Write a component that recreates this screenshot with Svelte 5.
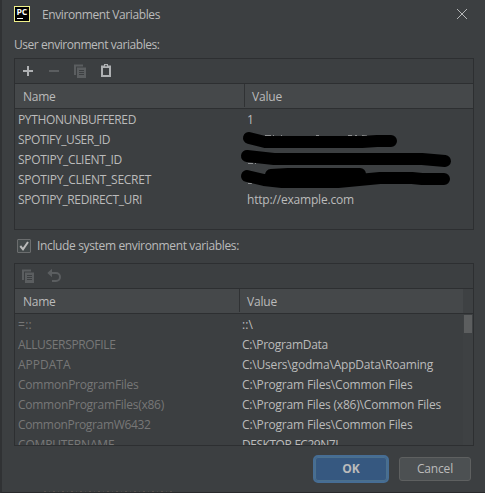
<script>
  const userVars = [
    { name: 'PYTHONUNBUFFERED', w: 118, value: '1', vw: 6 },
    { name: 'SPOTIFY_USER_ID', w: 92 },
    { name: 'SPOTIPY_CLIENT_ID', w: 104 },
    { name: 'SPOTIPY_CLIENT_SECRET', w: 133 },
    { name: 'SPOTIPY_REDIRECT_URI', w: 124, value: 'http://example.com', vw: 107 },
  ];
  const systemVars = [
    { name: '=::', w: 14, value: '::\\', vw: 11 },
    { name: 'ALLUSERSPROFILE', w: 97.5, value: 'C:\\ProgramData', vw: 86 },
    { name: 'APPDATA', w: 52.5, value: 'C:\\Users\\godma\\AppData\\Roaming', vw: 191 },
    { name: 'CommonProgramFiles', w: 120.5, value: 'C:\\Program Files\\Common Files', vw: 170.5 },
    { name: 'CommonProgramFiles(x86)', w: 146, value: 'C:\\Program Files (x86)\\Common Files', vw: 199 },
    { name: 'CommonProgramW6432', w: 132.5, value: 'C:\\Program Files\\Common Files', vw: 170.5 },
    { name: 'COMPUTERNAME', w: 96.5, value: 'DESKTOP-FC29N7L', vw: 99 },
  ];

  // Tracks a label so that it takes up the given width.
  function fit(node, width) {
    const natural = node.getBoundingClientRect().width;
    node.style.letterSpacing = (width - natural) / node.textContent.length + 'px';
  }
</script>

{#snippet label(text, width)}<span class="label" use:fit={width}>{text}</span>{/snippet}

{#snippet copyIcon()}
  <svg class="icon off" width="16" height="16" viewBox="0 0 16 16">
    <path d="M2 1.5h9v2H4v8.5H2z" fill="currentColor" />
    <path fill-rule="evenodd" d="M5 4.5h9v10.5H5zM7 7v1h5V7zM7 9v1h5V9zM7 11v1h5v-1z" fill="currentColor" />
  </svg>
{/snippet}

<div class="dialog">
  <header>
    <svg width="16" height="16" viewBox="0 0 16 16">
      <rect x=".5" y=".5" width="15" height="15" fill="#000" stroke="#eff08a" />
      <text x="2.4" y="9" font-size="8.5" font-weight="700" fill="#fff" textLength="11" lengthAdjust="spacingAndGlyphs">PC</text>
      <path d="M3 12.5h6" stroke="#fff" />
    </svg>
    <h1>{@render label('Environment Variables', 118)}</h1>
    <svg class="close" width="12" height="12" viewBox="0 0 12 12"><path d="M1 1l10 10M11 1L1 11" stroke="#b4b6b7" stroke-width="1" /></svg>
  </header>

  <div class="caption">{@render label('User environment variables:', 145.5)}</div>

  <section class="panel user">
    <div class="toolbar">
      <svg class="icon" width="16" height="16" viewBox="0 0 16 16"><path d="M3 8h10M8 3v10" stroke="currentColor" stroke-width="2" /></svg>
      <svg class="icon off" width="16" height="16" viewBox="0 0 16 16"><path d="M3 8h10" stroke="currentColor" stroke-width="2" /></svg>
      {@render copyIcon()}
      <svg class="icon" width="16" height="16" viewBox="0 0 16 16">
        <path fill-rule="evenodd" d="M3 2.5h3V1h4v1.5h3V14H3zM5 5v7h6V5z" fill="currentColor" /><path d="M7 2.2h2v1H7z" fill="#3c3f41" />
      </svg>
    </div>
    <div class="columns">
      <div class="name">{@render label('Name', 32.5)}</div>
      <div class="value">{@render label('Value', 30)}</div>
    </div>
    <div class="rows">
      {#each userVars as row}
        <div class="row">
          <div class="name">{@render label(row.name, row.w)}</div>
          <div class="value">{#if row.value}{@render label(row.value, row.vw)}{/if}</div>
        </div>
      {/each}
      <svg class="redaction" width="220" height="65" viewBox="236 130 220 65" fill="none" stroke="#000" stroke-linecap="round" stroke-linejoin="round">
        <g stroke="#8e9091" stroke-width="1" stroke-linecap="butt">
          <path d="M265 135.5h6M273 135.5h1M281 135.5h1M316 135.5h3M348 135.5h4M355 135.5h2M362 135.5h5" />
          <path d="M248 163.5h5M255 163.5h1M248 183.5h4" />
        </g>
        <path stroke-width="12" d="M249 138L265 142H362L377 141H391" />
        <path stroke-width="12" d="M247 156L274 159H422L445 161" />
        <path stroke-width="12" d="M247 176L264 180L282 182H338L380 178H412L422 179H444" />
        <path stroke-width="12" d="M271 175L288 174H360M271 178H358" />
      </svg>
    </div>
  </section>

  <div class="include">
    <span class="check"><svg width="12" height="12" viewBox="0 0 12 12"><path d="M2.3 6l2.7 3.3L10 2" fill="none" stroke="#bbb" stroke-width="2" /></svg></span>
    {@render label('Include system environment variables:', 202)}
  </div>

  <section class="panel system">
    <div class="toolbar">
      {@render copyIcon()}
      <svg class="icon off" width="16" height="16" viewBox="0 0 16 16">
        <path d="M5 5h5a4 4 0 0 1 0 8H6" fill="none" stroke="currentColor" stroke-width="2" /><path d="M1.3 5L6 .8v8.4z" fill="currentColor" />
      </svg>
    </div>
    <div class="columns">
      <div class="name">{@render label('Name', 32.5)}</div>
      <div class="value">{@render label('Value', 30)}</div>
      <div class="corner"></div>
    </div>
    <div class="body">
      <div class="rows">
        {#each systemVars as row}
          <div class="row">
            <div class="name">{@render label(row.name, row.w)}</div>
            <div class="value">{@render label(row.value, row.vw)}</div>
          </div>
        {/each}
      </div>
      <div class="track"><div class="thumb"></div></div>
    </div>
  </section>

  <footer>
    <button class="ok">{@render label('OK', 17.5)}</button>
    <button class="cancel">{@render label('Cancel', 36)}</button>
  </footer>
  <div class="behind"></div>
</div>

<style>
  :global(body) { background: #3c3f41; overflow: hidden; }
  .dialog {
    box-sizing: border-box;
    width: 485px;
    height: 493px;
    padding: 0 11px 0 12px;
    border-left: 2px solid #303234;
    border-bottom: 1px solid #292a2c;
    background: #3c3f41;
    color: #bbbbbb;
    font: 12px/20px "Open Sans", "Noto Sans", sans-serif;
    display: flex;
    flex-direction: column;
    overflow: hidden;
  }
  .label { display: inline-block; white-space: pre; }
  header { display: flex; align-items: center; height: 28px; padding-right: 6px; flex: none; }
  h1 { margin: 1px 0 0 12px; font-size: 12px; font-weight: 400; line-height: 20px; flex: 1; }
  .close { display: block; }
  .caption { height: 20px; margin: 7px 0 3px; flex: none; }
  .panel {
    box-sizing: border-box;
    border: 1px solid #2d2f31;
    display: flex;
    flex-direction: column;
    overflow: hidden;
    flex: none;
  }
  .user { height: 172px; --split: 230px; --value: 232px; }
  .system { height: 183px; --split: 225px; --value: 227px; }
  .toolbar { display: flex; gap: 10px; align-items: center; height: 24px; padding-left: 5px; flex: none; }
  .icon { color: #afb1b3; flex: none; }
  .icon.off { color: #5b5e60; }
  .columns {
    display: flex;
    height: 24px;
    border-top: 1px solid #2d2f31;
    border-bottom: 1px solid #2d2f31;
    background: #45484a;
    line-height: 25px;
    flex: none;
  }
  .columns .name { box-sizing: border-box; width: var(--split); padding-left: 8px; border-right: 1px solid #303234; margin-bottom: 1px; }
  .columns .value { padding-left: 7px; flex: 1; }
  .corner { width: 10px; background: #3e4143; }
  .rows { position: relative; flex: 1; }
  .user .rows { padding-top: 1px; }
  .row { display: flex; height: 20px; }
  .row .name { box-sizing: border-box; width: var(--value); padding-left: 3px; flex: none; }
  .redaction { position: absolute; left: 221px; top: 21px; }
  .include { display: flex; align-items: center; gap: 6px; height: 20px; margin: 6px 0 7px; padding-left: 3px; flex: none; }
  .check { box-sizing: border-box; width: 14px; height: 14px; border: 1px solid #6b6d6e; border-radius: 1px; background: #43494a; display: flex; }
  .body { display: flex; flex: 1; min-height: 0; padding-top: 1px; }
  .system .row .name { color: #777777; }
  .track { width: 10px; background: #3e4143; flex: none; }
  .thumb { width: 8px; height: 18px; margin-left: 1px; background: #5c5e5f; }
  footer { display: flex; justify-content: flex-end; align-items: center; gap: 10px; height: 28px; margin-top: 9px; padding-right: 3px; flex: none; }
  button { box-sizing: border-box; padding: 0; font: inherit; color: #bbbbbb; display: flex; align-items: center; justify-content: center; }
  .ok { width: 76px; height: 28px; border: 2px solid #466d94; border-radius: 5px; background: #365880; box-shadow: inset 0 0 0 1px #4c708c; font-weight: 700; }
  .cancel { width: 72px; height: 24px; border: 1px solid #5e6060; border-radius: 3px; background: #4c5052; }
  .behind {
    width: 131px;
    height: 1px;
    margin: auto 0 0 30px;
    background: repeating-linear-gradient(90deg, #55504d 0 2px, transparent 2px 5px, #4a494a 5px 6px, transparent 6px 9px);
    flex: none;
  }
</style>
